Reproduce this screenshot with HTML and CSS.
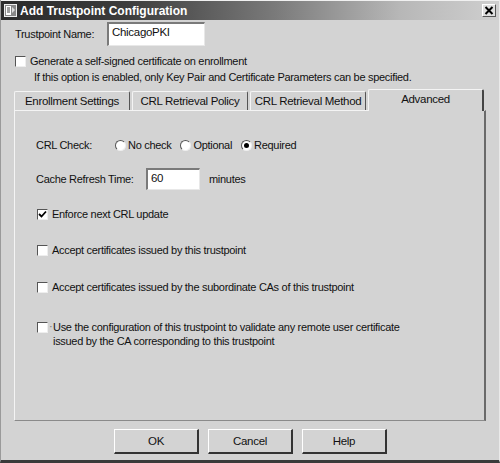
FILE: index.html
```html
<!DOCTYPE html>
<html>
<head>
<meta charset="utf-8">
<link rel="stylesheet" href="styles.css">
</head>
<body>
<div class="window">
  <div class="titlebar">
    <div class="title-left">
      <svg class="app-icon" width="13" height="13" viewBox="0 0 13 13">
        <rect x="0.5" y="0.5" width="12" height="12" fill="#888" stroke="#eee"/>
        <rect x="2" y="2" width="5" height="9" fill="#fff"/>
        <path d="M3 4h3M3 6h3M3 8h3" stroke="#444" stroke-width="1"/>
        <path d="M8 3l3 3-3 3z" fill="#ddd"/>
      </svg>
      <span class="title">Add Trustpoint Configuration</span>
    </div>
    <div class="close">
      <svg width="10" height="9" viewBox="0 0 10 9"><path d="M1.5 1l7 7M8.5 1l-7 7" stroke="#000" stroke-width="2"/></svg>
    </div>
  </div>
  <div class="content">
    <div class="name-row">
      <span class="label">Trustpoint Name:</span>
      <div class="textbox name-box">ChicagoPKI</div>
    </div>
    <div class="check-row gen">
      <span class="check"></span>
      <span>Generate a self-signed certificate on enrollment</span>
    </div>
    <div class="note">If this option is enabled, only Key Pair and Certificate Parameters can be specified.</div>

    <div class="tabs">
      <div class="tab">Enrollment Settings</div>
      <div class="tab">CRL Retrieval Policy</div>
      <div class="tab">CRL Retrieval Method</div>
      <div class="tab active">Advanced</div>
    </div>
    <div class="panel">
      <div class="crl-row">
        <span class="crl-label">CRL Check:</span>
        <span class="radio-item"><span class="radio"></span>No check</span>
        <span class="radio-item"><span class="radio"></span>Optional</span>
        <span class="radio-item"><span class="radio on"></span>Required</span>
      </div>
      <div class="cache-row">
        <span class="cache-label">Cache Refresh Time:</span>
        <div class="textbox cache-box">60</div>
        <span>minutes</span>
      </div>
      <div class="check-row opt r1">
        <span class="check checked">
          <svg width="9" height="9" viewBox="0 0 9 9"><path d="M1 4l2.5 2.5L8 1.5" fill="none" stroke="#000" stroke-width="1.8"/></svg>
        </span>
        <span>Enforce next CRL update</span>
      </div>
      <div class="check-row opt r2">
        <span class="check"></span>
        <span>Accept certificates issued by this trustpoint</span>
      </div>
      <div class="check-row opt r3">
        <span class="check"></span>
        <span>Accept certificates issued by the subordinate CAs of this trustpoint</span>
      </div>
      <div class="check-row opt r4">
        <span class="check"></span>
        <span class="dot">·</span>
        <span class="multi">Use the configuration of this trustpoint to validate any remote user certificate<br>issued by the CA corresponding to this trustpoint</span>
      </div>
    </div>
    <div class="buttons">
      <div class="btn">OK</div>
      <div class="btn">Cancel</div>
      <div class="btn">Help</div>
    </div>
  </div>
</div>
</body>
</html>
```
FILE: styles.css
```css
* { box-sizing: border-box; }
html, body { margin: 0; padding: 0; }
body {
  width: 500px;
  height: 463px;
  background: #d2d2d2;
  font-family: "Liberation Sans", Arial, sans-serif;
  font-size: 11px;
  letter-spacing: -0.3px;
  color: #111;
  overflow: hidden;
}
.window {
  width: 500px;
  height: 463px;
  background: #d3d3d3;
  border-left: 1px solid #9a9a9a;
  border-bottom: 3px solid #3a3a3a;
  border-right: 1px solid #eaeaea;
  display: flex;
  flex-direction: column;
}
.titlebar {
  height: 20px;
  border-top: 1px solid #f0f0f0;
  background: linear-gradient(to right, #2b2b2b 0%, #3c3c3c 25%, #7a7a7a 55%, #b7b7b7 80%, #cfcfcf 100%);
  display: flex;
  align-items: center;
  justify-content: space-between;
  padding: 0 3px 0 3px;
}
.title-left { display: flex; align-items: center; gap: 3px; }
.app-icon { display: block; }
.title {
  color: #fff;
  font-weight: bold;
  font-size: 12px;
  letter-spacing: 0;
}
.close {
  width: 14px;
  height: 13px;
  background: #e0e0e0;
  border: 1px solid;
  border-color: #fff #555 #555 #fff;
  display: flex;
  align-items: center;
  justify-content: center;
}
.content {
  flex: 1;
  padding: 0 0 0 13px;
  display: flex;
  flex-direction: column;
}
.name-row {
  display: flex;
  align-items: center;
  margin-top: 2px;
  height: 24px;
}
.name-row .label { width: 93px; padding-left: 1px; }
.textbox {
  background: #fff;
  border-top: 2px solid #7a7a7a;
  border-left: 2px solid #7a7a7a;
  border-right: 1px solid #e8e8e8;
  border-bottom: 1px solid #e8e8e8;
  padding: 1px 3px;
  color: #111;
}
.name-box { width: 98px; height: 24px; padding-top: 2px; font-size: 11.5px; }
.check-row { display: flex; align-items: center; }
.check {
  width: 11px;
  height: 11px;
  background: #fff;
  border-top: 1px solid #555;
  border-left: 1px solid #555;
  border-right: 1px solid #eee;
  border-bottom: 1px solid #eee;
  margin-right: 4px;
  display: flex;
  align-items: center;
  justify-content: center;
  flex-shrink: 0;
}
.gen { margin-top: 9px; padding-left: 1px; }
.note { margin-top: 4px; padding-left: 20px; }
.tabs {
  display: flex;
  margin-top: 7px;
  height: 20px;
  align-items: flex-end;
}
.tab {
  width: 116px;
  height: 19px;
  margin-right: 2px;
  display: flex;
  align-items: center;
  justify-content: center;
  border-top: 1px solid #f4f4f4;
  border-left: 1px solid #f4f4f4;
  border-right: 1px solid #555;
  border-radius: 2px 2px 0 0;
  background: #d3d3d3;
  font-size: 11.5px;
}
.tab.active {
  height: 22px;
  padding-bottom: 4px;
  border-right: 2px solid #444;
  margin-bottom: -1px;
  position: relative;
  z-index: 1;
}
.panel {
  width: 472px;
  height: 311px;
  border-top: 1px solid #f4f4f4;
  border-left: 1px solid #f4f4f4;
  border-right: 2px solid #6a6a6a;
  border-bottom: 1px solid #8a8a8a;
  display: flex;
  flex-direction: column;
  padding-left: 21px;
}
.crl-row { display: flex; align-items: center; margin-top: 27px; height: 14px; }
.crl-label { width: 79px; }
.radio-item { display: flex; align-items: center; margin-right: 9px; }
.radio {
  width: 11px;
  height: 11px;
  border-radius: 50%;
  background: #fff;
  border: 1px solid;
  border-color: #555 #eee #eee #555;
  margin-right: 2px;
  display: flex;
  align-items: center;
  justify-content: center;
}
.radio.on::after {
  content: "";
  width: 5px;
  height: 5px;
  border-radius: 50%;
  background: #000;
}
.cache-row { display: flex; align-items: center; margin-top: 16px; height: 22px; }
.cache-label { width: 110px; }
.cache-box { width: 54px; height: 22px; margin-right: 9px; padding-top: 2px; font-size: 11.5px; }
.opt { padding-left: 1px; }
.r1 { margin-top: 18px; }
.r2 { margin-top: 24px; }
.r3 { margin-top: 25px; }
.r4 { margin-top: 27px; align-items: flex-start; }
.r4 .check { margin-top: 2px; margin-right: 1px; }
.dot { width: 4px; color: #777; }
.multi { line-height: 14px; }
.buttons {
  display: flex;
  gap: 9px;
  margin-top: 8px;
  padding-left: 100px;
}
.btn {
  width: 85px;
  height: 25px;
  background: #d3d3d3;
  border-top: 1px solid #fff;
  border-left: 1px solid #fff;
  border-right: 2px solid #333;
  border-bottom: 2px solid #333;
  display: flex;
  align-items: center;
  justify-content: center;
  font-size: 11.5px;
}
```
